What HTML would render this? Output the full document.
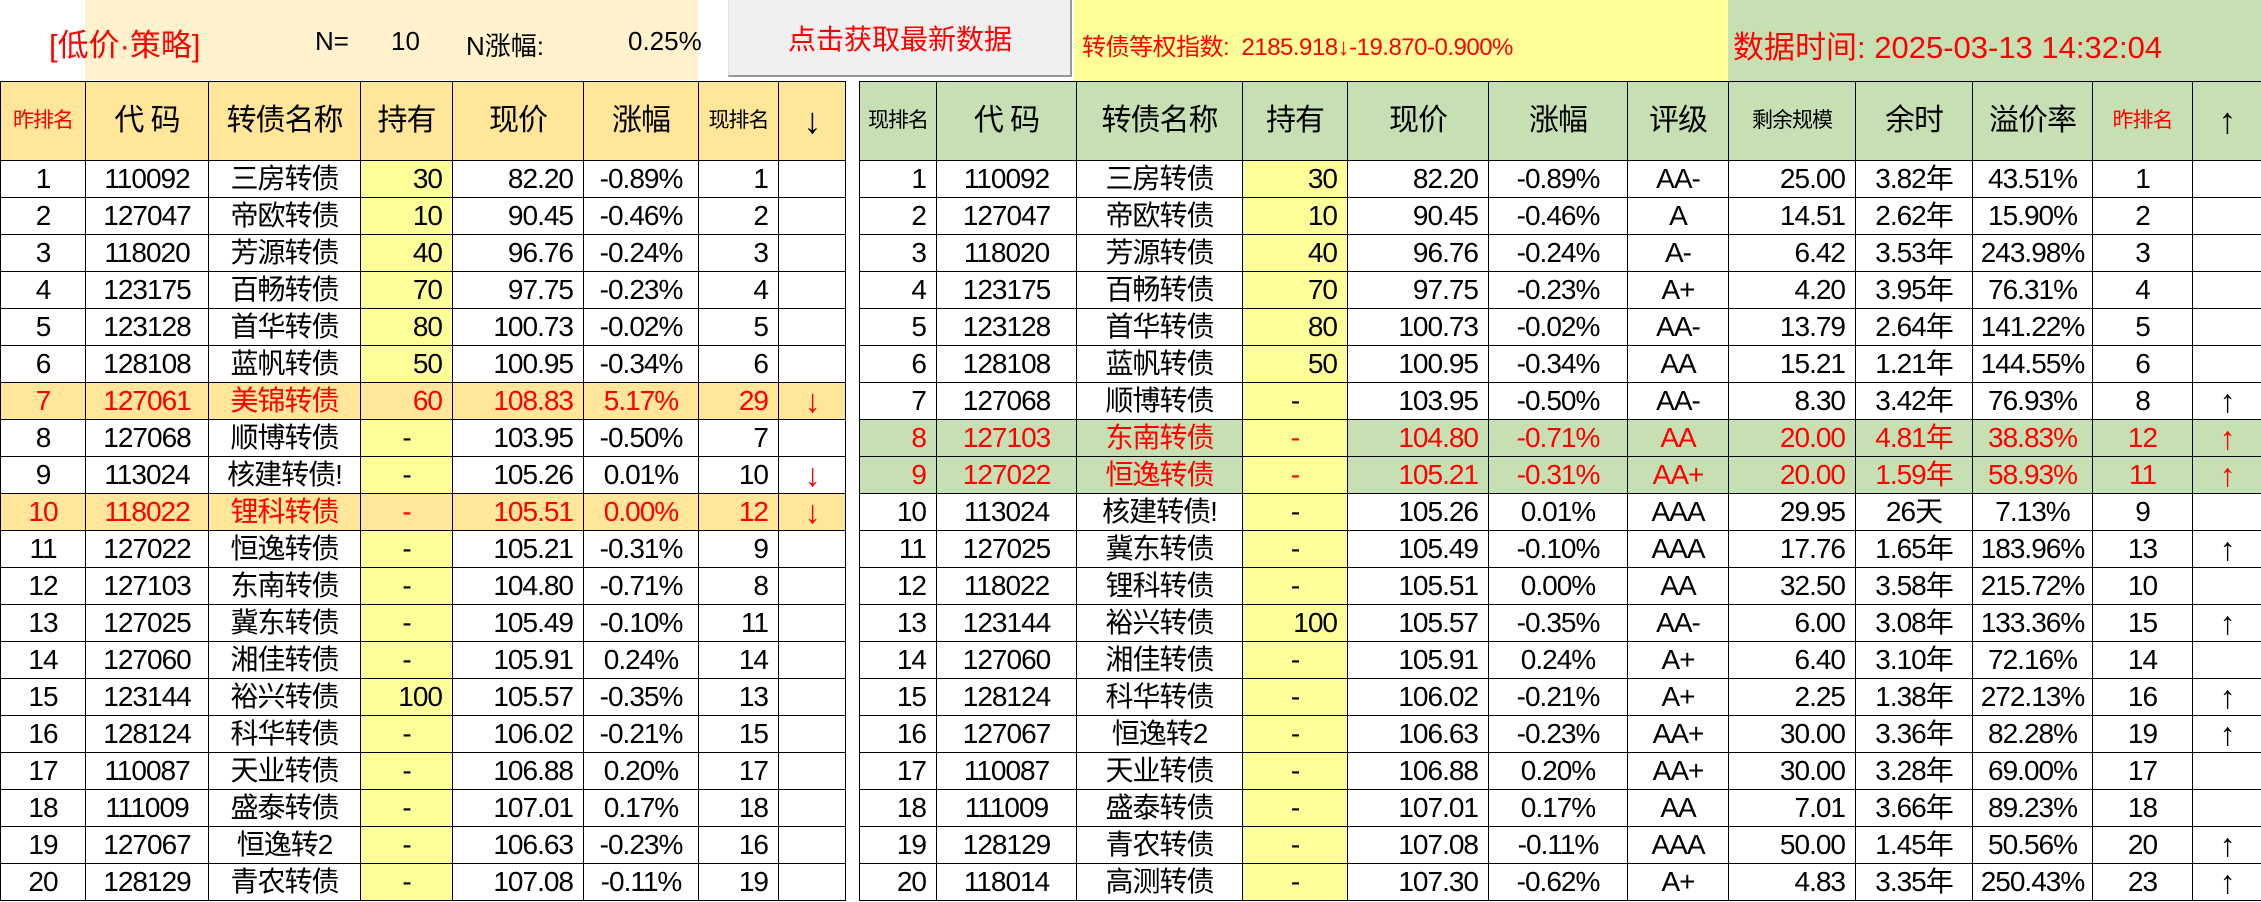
<!DOCTYPE html>
<html><head><meta charset="utf-8"><style>
*{margin:0;padding:0;box-sizing:border-box}
body{width:2261px;height:902px;background:#fff;position:relative;overflow:hidden;font-family:"Liberation Sans","Noto Sans CJK SC",sans-serif;color:#000}
.abs{position:absolute}
table{position:absolute;top:81px;border-collapse:collapse;table-layout:fixed}
td{border:1.5px solid #000;height:37px;font-size:28px;letter-spacing:-1px;text-align:center;white-space:nowrap;overflow:hidden;padding:0 4px;line-height:34px}
tr.h td{height:79px;font-size:30px}
tr.h td.s{font-size:21px;letter-spacing:-1px}
tr.h td.a{font-size:36px}
td.a{font-size:32px}
#L tr.h td{background:#FFE699}
#R tr.h td{background:#C6E0B4}
.red{color:#f00}
#L td:nth-child(4),#L td:nth-child(5),#L td:nth-child(7){text-align:right;padding-right:10px}
#R td:nth-child(1),#R td:nth-child(4),#R td:nth-child(5),#R td:nth-child(8){text-align:right;padding-right:10px}
#L tr:not(.h) td:nth-child(4),#R tr:not(.h) td:nth-child(4){background:#FFFF99}
td.c{text-align:center!important;padding-right:4px!important}
#L tr.o td{background:#FFE699!important;color:#f00}
#R tr.g td{background:#C6E0B4;color:#f00}
</style></head><body>
<div class="abs" style="left:85px;top:0;width:613px;height:80px;background:#FFF2CC"></div>
<div class="abs red" style="left:49px;top:20px;font-size:31px">[低价·策略]</div>
<div class="abs" style="left:315px;top:26px;font-size:26px">N=</div>
<div class="abs" style="left:391px;top:26px;font-size:26px">10</div>
<div class="abs" style="left:466px;top:26px;font-size:26px">N涨幅:</div>
<div class="abs" style="left:628px;top:26px;font-size:26px">0.25%</div>
<div class="abs" style="left:728px;top:0;width:344px;height:77px;background:#F0F0F0;border-right:2px solid #999;border-bottom:2px solid #999;border-left:1px solid #ddd"></div>
<div class="abs red" style="left:728px;top:18px;width:344px;text-align:center;font-size:28px">点击获取最新数据</div>
<div class="abs" style="left:1074px;top:0;width:654px;height:81px;background:#FFFF99"></div>
<div class="abs red" style="left:1082px;top:27px;font-size:24px;letter-spacing:-0.5px">转债等权指数:&nbsp; 2185.918↓-19.870-0.900%</div>
<div class="abs" style="left:1728px;top:0;width:533px;height:81px;background:#C6E0B4"></div>
<div class="abs red" style="left:1733px;top:22px;font-size:31px">数据时间: 2025-03-13 14:32:04</div>

<table id="L" style="left:0;width:845px">
<colgroup><col style="width:85px"><col style="width:123px"><col style="width:152px"><col style="width:92px"><col style="width:131px"><col style="width:115px"><col style="width:80px"><col style="width:67px"></colgroup>
<tr class="h"><td class="s red">昨排名</td><td>代 码</td><td>转债名称</td><td class="c">持有</td><td class="c">现价</td><td>涨幅</td><td class="s c">现排名</td><td class="a">↓</td></tr>
<tr><td>1</td><td>110092</td><td>三房转债</td><td>30</td><td>82.20</td><td>-0.89%</td><td>1</td><td></td></tr>
<tr><td>2</td><td>127047</td><td>帝欧转债</td><td>10</td><td>90.45</td><td>-0.46%</td><td>2</td><td></td></tr>
<tr><td>3</td><td>118020</td><td>芳源转债</td><td>40</td><td>96.76</td><td>-0.24%</td><td>3</td><td></td></tr>
<tr><td>4</td><td>123175</td><td>百畅转债</td><td>70</td><td>97.75</td><td>-0.23%</td><td>4</td><td></td></tr>
<tr><td>5</td><td>123128</td><td>首华转债</td><td>80</td><td>100.73</td><td>-0.02%</td><td>5</td><td></td></tr>
<tr><td>6</td><td>128108</td><td>蓝帆转债</td><td>50</td><td>100.95</td><td>-0.34%</td><td>6</td><td></td></tr>
<tr class="o"><td>7</td><td>127061</td><td>美锦转债</td><td>60</td><td>108.83</td><td>5.17%</td><td>29</td><td class="a">↓</td></tr>
<tr><td>8</td><td>127068</td><td>顺博转债</td><td class="c">-</td><td>103.95</td><td>-0.50%</td><td>7</td><td></td></tr>
<tr><td>9</td><td>113024</td><td>核建转债!</td><td class="c">-</td><td>105.26</td><td>0.01%</td><td>10</td><td class="red a">↓</td></tr>
<tr class="o"><td>10</td><td>118022</td><td>锂科转债</td><td class="c">-</td><td>105.51</td><td>0.00%</td><td>12</td><td class="a">↓</td></tr>
<tr><td>11</td><td>127022</td><td>恒逸转债</td><td class="c">-</td><td>105.21</td><td>-0.31%</td><td>9</td><td></td></tr>
<tr><td>12</td><td>127103</td><td>东南转债</td><td class="c">-</td><td>104.80</td><td>-0.71%</td><td>8</td><td></td></tr>
<tr><td>13</td><td>127025</td><td>冀东转债</td><td class="c">-</td><td>105.49</td><td>-0.10%</td><td>11</td><td></td></tr>
<tr><td>14</td><td>127060</td><td>湘佳转债</td><td class="c">-</td><td>105.91</td><td>0.24%</td><td>14</td><td></td></tr>
<tr><td>15</td><td>123144</td><td>裕兴转债</td><td>100</td><td>105.57</td><td>-0.35%</td><td>13</td><td></td></tr>
<tr><td>16</td><td>128124</td><td>科华转债</td><td class="c">-</td><td>106.02</td><td>-0.21%</td><td>15</td><td></td></tr>
<tr><td>17</td><td>110087</td><td>天业转债</td><td class="c">-</td><td>106.88</td><td>0.20%</td><td>17</td><td></td></tr>
<tr><td>18</td><td>111009</td><td>盛泰转债</td><td class="c">-</td><td>107.01</td><td>0.17%</td><td>18</td><td></td></tr>
<tr><td>19</td><td>127067</td><td>恒逸转2</td><td class="c">-</td><td>106.63</td><td>-0.23%</td><td>16</td><td></td></tr>
<tr><td>20</td><td>128129</td><td>青农转债</td><td class="c">-</td><td>107.08</td><td>-0.11%</td><td>19</td><td></td></tr>
</table>

<table id="R" style="left:859px;width:1402px">
<colgroup><col style="width:77px"><col style="width:140px"><col style="width:166px"><col style="width:105px"><col style="width:141px"><col style="width:139px"><col style="width:101px"><col style="width:127px"><col style="width:117px"><col style="width:120px"><col style="width:100px"><col style="width:69px"></colgroup>
<tr class="h"><td class="s c">现排名</td><td>代 码</td><td>转债名称</td><td class="c">持有</td><td class="c">现价</td><td>涨幅</td><td>评级</td><td class="s c">剩余规模</td><td>余时</td><td>溢价率</td><td class="s red">昨排名</td><td class="a">↑</td></tr>
<tr><td>1</td><td>110092</td><td>三房转债</td><td>30</td><td>82.20</td><td>-0.89%</td><td>AA-</td><td>25.00</td><td>3.82年</td><td>43.51%</td><td>1</td><td></td></tr>
<tr><td>2</td><td>127047</td><td>帝欧转债</td><td>10</td><td>90.45</td><td>-0.46%</td><td>A</td><td>14.51</td><td>2.62年</td><td>15.90%</td><td>2</td><td></td></tr>
<tr><td>3</td><td>118020</td><td>芳源转债</td><td>40</td><td>96.76</td><td>-0.24%</td><td>A-</td><td>6.42</td><td>3.53年</td><td>243.98%</td><td>3</td><td></td></tr>
<tr><td>4</td><td>123175</td><td>百畅转债</td><td>70</td><td>97.75</td><td>-0.23%</td><td>A+</td><td>4.20</td><td>3.95年</td><td>76.31%</td><td>4</td><td></td></tr>
<tr><td>5</td><td>123128</td><td>首华转债</td><td>80</td><td>100.73</td><td>-0.02%</td><td>AA-</td><td>13.79</td><td>2.64年</td><td>141.22%</td><td>5</td><td></td></tr>
<tr><td>6</td><td>128108</td><td>蓝帆转债</td><td>50</td><td>100.95</td><td>-0.34%</td><td>AA</td><td>15.21</td><td>1.21年</td><td>144.55%</td><td>6</td><td></td></tr>
<tr><td>7</td><td>127068</td><td>顺博转债</td><td class="c">-</td><td>103.95</td><td>-0.50%</td><td>AA-</td><td>8.30</td><td>3.42年</td><td>76.93%</td><td>8</td><td class="a">↑</td></tr>
<tr class="g"><td>8</td><td>127103</td><td>东南转债</td><td class="c">-</td><td>104.80</td><td>-0.71%</td><td>AA</td><td>20.00</td><td>4.81年</td><td>38.83%</td><td>12</td><td class="a">↑</td></tr>
<tr class="g"><td>9</td><td>127022</td><td>恒逸转债</td><td class="c">-</td><td>105.21</td><td>-0.31%</td><td>AA+</td><td>20.00</td><td>1.59年</td><td>58.93%</td><td>11</td><td class="a">↑</td></tr>
<tr><td>10</td><td>113024</td><td>核建转债!</td><td class="c">-</td><td>105.26</td><td>0.01%</td><td>AAA</td><td>29.95</td><td>26天</td><td>7.13%</td><td>9</td><td></td></tr>
<tr><td>11</td><td>127025</td><td>冀东转债</td><td class="c">-</td><td>105.49</td><td>-0.10%</td><td>AAA</td><td>17.76</td><td>1.65年</td><td>183.96%</td><td>13</td><td class="a">↑</td></tr>
<tr><td>12</td><td>118022</td><td>锂科转债</td><td class="c">-</td><td>105.51</td><td>0.00%</td><td>AA</td><td>32.50</td><td>3.58年</td><td>215.72%</td><td>10</td><td></td></tr>
<tr><td>13</td><td>123144</td><td>裕兴转债</td><td>100</td><td>105.57</td><td>-0.35%</td><td>AA-</td><td>6.00</td><td>3.08年</td><td>133.36%</td><td>15</td><td class="a">↑</td></tr>
<tr><td>14</td><td>127060</td><td>湘佳转债</td><td class="c">-</td><td>105.91</td><td>0.24%</td><td>A+</td><td>6.40</td><td>3.10年</td><td>72.16%</td><td>14</td><td></td></tr>
<tr><td>15</td><td>128124</td><td>科华转债</td><td class="c">-</td><td>106.02</td><td>-0.21%</td><td>A+</td><td>2.25</td><td>1.38年</td><td>272.13%</td><td>16</td><td class="a">↑</td></tr>
<tr><td>16</td><td>127067</td><td>恒逸转2</td><td class="c">-</td><td>106.63</td><td>-0.23%</td><td>AA+</td><td>30.00</td><td>3.36年</td><td>82.28%</td><td>19</td><td class="a">↑</td></tr>
<tr><td>17</td><td>110087</td><td>天业转债</td><td class="c">-</td><td>106.88</td><td>0.20%</td><td>AA+</td><td>30.00</td><td>3.28年</td><td>69.00%</td><td>17</td><td></td></tr>
<tr><td>18</td><td>111009</td><td>盛泰转债</td><td class="c">-</td><td>107.01</td><td>0.17%</td><td>AA</td><td>7.01</td><td>3.66年</td><td>89.23%</td><td>18</td><td></td></tr>
<tr><td>19</td><td>128129</td><td>青农转债</td><td class="c">-</td><td>107.08</td><td>-0.11%</td><td>AAA</td><td>50.00</td><td>1.45年</td><td>50.56%</td><td>20</td><td class="a">↑</td></tr>
<tr><td>20</td><td>118014</td><td>高测转债</td><td class="c">-</td><td>107.30</td><td>-0.62%</td><td>A+</td><td>4.83</td><td>3.35年</td><td>250.43%</td><td>23</td><td class="a">↑</td></tr>
</table>
</body></html>
